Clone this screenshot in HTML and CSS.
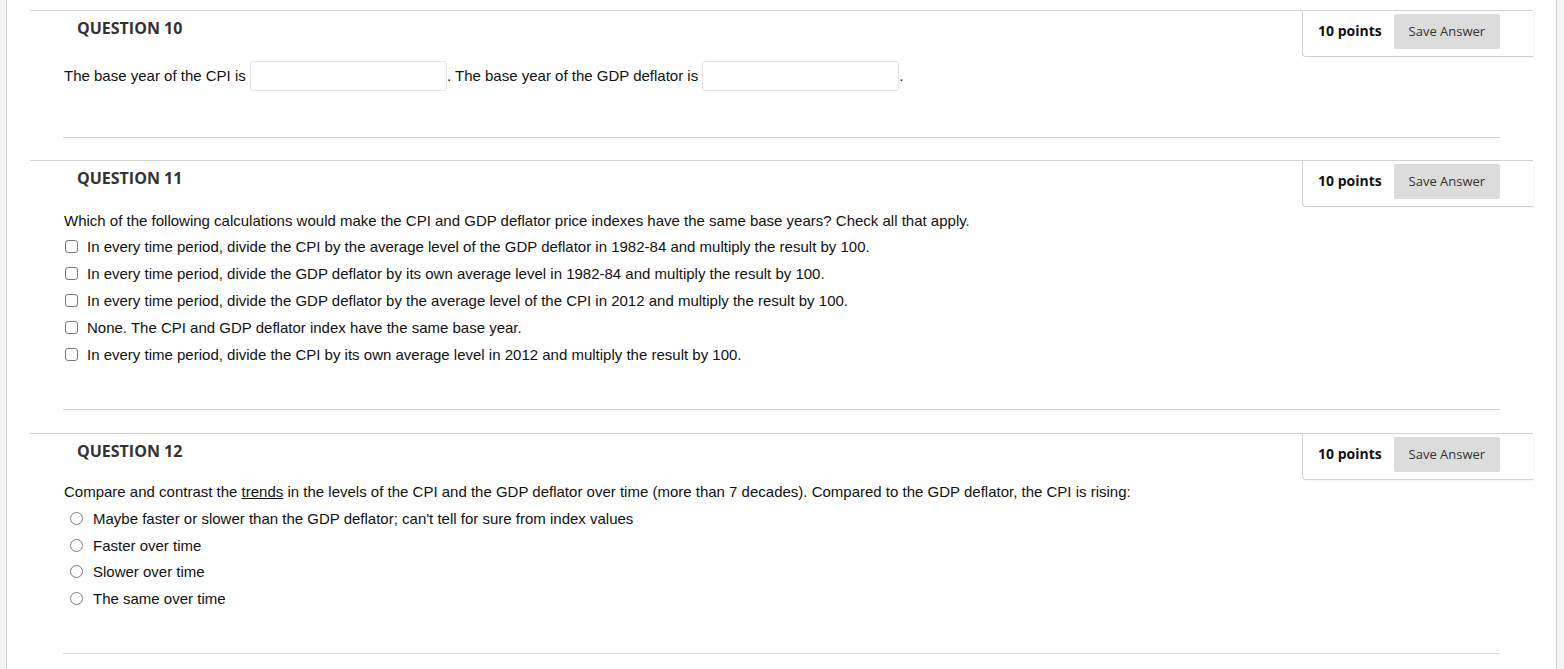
FILE: index.html
```html
<!DOCTYPE html>
<html>
<head>
<meta charset="utf-8">
<link rel="stylesheet" href="styles.css">
</head>
<body>
<div class="frame">
  <section class="question q10">
    <div class="q-header">
      <h3 class="q-title">QUESTION 10</h3>
      <div class="points-box">
        <span class="points">10 points</span>
        <button class="save-btn">Save Answer</button>
      </div>
    </div>
    <div class="q-body">
      <p class="fill-line">The base year of the CPI is <input class="blank" type="text">. The base year of the GDP deflator is <input class="blank" type="text">.</p>
    </div>
  </section>

  <section class="question q11">
    <div class="q-header">
      <h3 class="q-title">QUESTION 11</h3>
      <div class="points-box">
        <span class="points">10 points</span>
        <button class="save-btn">Save Answer</button>
      </div>
    </div>
    <div class="q-body">
      <p class="prompt">Which of the following calculations would make the CPI and GDP deflator price indexes have the same base years? Check all that apply.</p>
      <ul class="options checks">
        <li><input type="checkbox" class="cb"><label>In every time period, divide the CPI by the average level of the GDP deflator in 1982-84 and multiply the result by 100.</label></li>
        <li><input type="checkbox" class="cb"><label>In every time period, divide the GDP deflator by its own average level in 1982-84 and multiply the result by 100.</label></li>
        <li><input type="checkbox" class="cb"><label>In every time period, divide the GDP deflator by the average level of the CPI in 2012 and multiply the result by 100.</label></li>
        <li><input type="checkbox" class="cb"><label>None. The CPI and GDP deflator index have the same base year.</label></li>
        <li><input type="checkbox" class="cb"><label>In every time period, divide the CPI by its own average level in 2012 and multiply the result by 100.</label></li>
      </ul>
    </div>
  </section>

  <section class="question q12">
    <div class="q-header">
      <h3 class="q-title">QUESTION 12</h3>
      <div class="points-box">
        <span class="points">10 points</span>
        <button class="save-btn">Save Answer</button>
      </div>
    </div>
    <div class="q-body">
      <p class="prompt">Compare and contrast the <u>trends</u> in the levels of the CPI and the GDP deflator over time (more than 7 decades). Compared to the GDP deflator, the CPI is rising:</p>
      <ul class="options radios">
        <li><input type="radio" name="q12" class="rb"><label>Maybe faster or slower than the GDP deflator; can't tell for sure from index values</label></li>
        <li><input type="radio" name="q12" class="rb"><label>Faster over time</label></li>
        <li><input type="radio" name="q12" class="rb"><label>Slower over time</label></li>
        <li><input type="radio" name="q12" class="rb"><label>The same over time</label></li>
      </ul>
    </div>
  </section>
</div>
</body>
</html>
```

FILE: styles.css
```css
html, body {
  margin: 0;
  padding: 0;
  background: #f5f5f5;
}

.frame {
  margin-left: 6px;
  width: 1551px;
  min-height: 669px;
  box-sizing: border-box;
  background: #ffffff;
  border-left: 1px solid #cfcfcf;
  border-right: 1px solid #cfcfcf;
  padding-top: 10px;
  font-family: "Liberation Sans", Arial, sans-serif;
  font-size: 15px;
  color: #111;
}

.question {
  margin: 0 23px;
}

.q11 { margin-top: 22px; }
.q12 { margin-top: 23px; }

.q-header {
  display: flex;
  justify-content: space-between;
  align-items: flex-start;
  border-top: 1px solid #d2d2d2;
  height: 46px;
}

.q-title {
  margin: 0;
  padding-left: 47px;
  padding-top: 6px;
  font-family: "Open Sans", sans-serif;
  font-weight: 700;
  font-size: 16px;
  line-height: 22px;
  color: #333;
}

.points-box {
  display: flex;
  align-items: center;
  gap: 12px;
  width: 231px;
  height: 46px;
  box-sizing: border-box;
  padding: 3px 33px 7px 15px;
  border-left: 1px solid #d2d2d2;
  border-bottom: 1px solid #d2d2d2;
  border-bottom-left-radius: 4px;
  box-shadow: 1px 1px 2px rgba(0, 0, 0, 0.04);
}

.points {
  font-family: "Open Sans", sans-serif;
  font-weight: 700;
  font-size: 14px;
  color: #111;
  white-space: nowrap;
  padding-bottom: 3px;
}

.save-btn {
  width: 107px;
  height: 35px;
  margin: 0;
  border: none;
  border-radius: 2px;
  background: #dcdcdc;
  font-family: "Open Sans", sans-serif;
  font-size: 13px;
  color: #333;
  padding: 0 0 1px 0;
}

.q-body {
  margin: 0 33px;
  border-bottom: 1px solid #d6d6d6;
}

.q10 .q-body {
  padding: 4px 0 46px 1px;
}

.q11 .q-body {
  padding: 6px 0 40px 1px;
}

.q12 .q-body {
  padding: 4px 0 41px 1px;
}

.fill-line {
  margin: 0;
  line-height: 30px;
  height: 30px;
}

.blank {
  width: 197px;
  height: 30px;
  box-sizing: border-box;
  border: 1px solid #e2e2e2;
  border-radius: 3px;
  margin: 0;
  padding: 0;
  vertical-align: top;
  background: #fff;
}

.prompt {
  margin: 0;
  line-height: 16px;
}

.options {
  list-style: none;
  margin: 5px 0 0 0;
  padding: 0;
}

.checks {
  margin-top: 4px;
  margin-bottom: 1px;
}

.options li {
  display: flex;
  align-items: center;
  height: 27px;
}

.radios li {
  height: 26.7px;
}

.cb, .rb {
  -webkit-appearance: none;
  appearance: none;
  width: 13px;
  height: 13px;
  box-sizing: border-box;
  border: 1px solid #7a7a7a;
  background: #fff;
  margin: 0;
  flex: none;
}

.cb {
  border-radius: 3px;
  margin-left: 1px;
  margin-right: 9px;
}

.rb {
  border-radius: 50%;
  margin-left: 6px;
  margin-right: 10px;
}

.radios {
  margin-top: 5px;
}
```
